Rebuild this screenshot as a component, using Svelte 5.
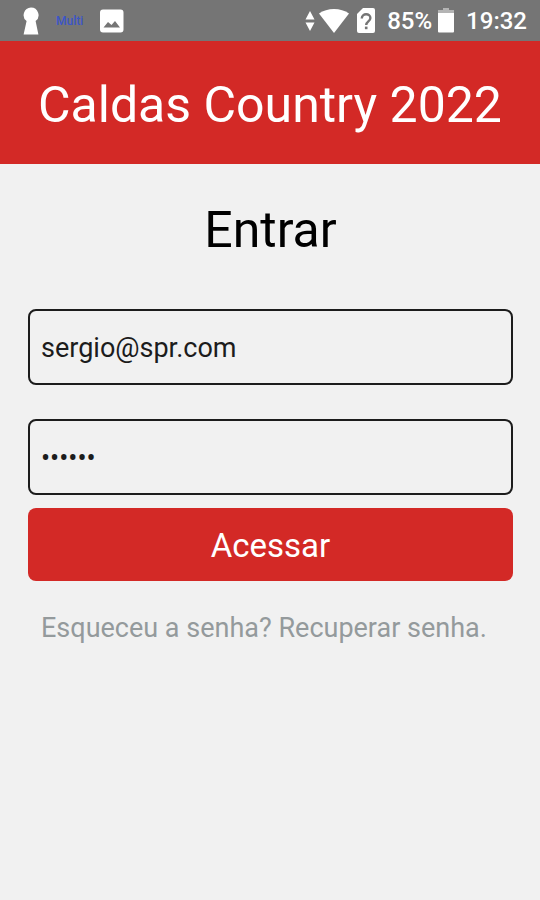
<script>
  let email = $state("sergio@spr.com");
  let password = $state("123456");

  function submit(e) {
    e.preventDefault();
  }
</script>

<div class="statusbar">
  <div class="group left">
    <svg width="16" height="28" viewBox="0 0 16 28" aria-hidden="true">
      <path fill="#fff" d="M8 0.5a7.6 7.6 0 0 1 4.6 13.6L15.4 27.5H0.6L3.6 14.1A7.6 7.6 0 0 1 8 0.5z" />
    </svg>
    <span class="carrier">Multi</span>
    <svg width="24" height="24" viewBox="0 0 24 24" aria-hidden="true">
      <path
        fill="#fff"
        fill-rule="evenodd"
        d="M3 0.5h17.500a3 3 0 0 1 3 3v17a3 3 0 0 1-3 3H3a3 3 0 0 1-3-3v-17a3 3 0 0 1 3-3zM3.500 18.500h16.500L15 12l-3.500 4L8 13z"
      />
    </svg>
  </div>
  <div class="group right">
    <svg width="10" height="20" viewBox="0 0 10 20" aria-hidden="true">
      <path fill="#fff" d="M5 0l4.500 8.500h-9zM5 20l4.500-8.500h-9z" />
    </svg>
    <svg class="wifi" width="30" height="24" viewBox="0 0 30 24" aria-hidden="true">
      <path fill="#fff" d="M0 4.500C8-1.500 22-1.500 30 4.500L15 24z" />
    </svg>
    <svg class="sim" width="18" height="25" viewBox="0 0 18 25" aria-hidden="true">
      <path fill="#fff" d="M6 0h10a2 2 0 0 1 2 2v21a2 2 0 0 1-2 2H2a2 2 0 0 1-2-2V6z" />
      <path
        fill="none"
        stroke="#757575"
        stroke-width="2.400"
        d="M4.800 10.500c0-5.600 8.600-5.600 8.600-0.400 0 3.400-4.200 3.300-4.200 7"
      />
      <path fill="#757575" d="M7.900 18.600h2.600v2.600H7.900z" />
    </svg>
    <span class="battery-level">85%</span>
    <svg class="battery" width="16" height="25" viewBox="0 0 16 25" aria-hidden="true">
      <path fill="#b4b4b4" d="M5 0h6v2h5v3H0V2h5z" />
      <path fill="#fff" d="M0 5h16v18.500a1 1 0 0 1-1 1H1a1 1 0 0 1-1-1z" />
    </svg>
    <span>19:32</span>
  </div>
</div>

<header>
  <h1>Caldas Country 2022</h1>
</header>

<main>
  <h2>Entrar</h2>
  <form onsubmit={submit}>
    <input class="email" type="email" aria-label="E-mail" bind:value={email} />
    <input type="password" aria-label="Senha" bind:value={password} />
    <button type="submit">Acessar</button>
  </form>
  <a href="#recuperar">Esqueceu a senha? Recuperar senha.</a>
</main>

<style>
  :global(body) {
    background: #f1f1f1;
    font-family: Roboto, sans-serif;
  }
  .statusbar {
    display: flex;
    align-items: center;
    justify-content: space-between;
    height: 41px;
    padding: 0 13px 0 23px;
    background: #757575;
    color: #fff;
    font-size: 24px;
    font-weight: 500;
  }
  .group {
    display: flex;
    align-items: center;
  }
  .left {
    gap: 15px;
  }
  .carrier {
    padding: 0 2px;
    color: #3c55c8;
    font-size: 12px;
  }
  .wifi {
    margin-left: 4px;
  }
  .sim {
    margin-left: 8px;
  }
  .battery-level {
    margin-left: 12px;
  }
  .battery {
    margin: 0 12px 0 6px;
  }
  header {
    padding: 35px 12px 29px;
    background: #d32926;
    color: #fff;
    text-align: center;
  }
  h1,
  h2 {
    margin: 0;
    font-size: 50px;
    font-weight: 400;
    line-height: 59px;
  }
  main {
    padding: 37px 27px 36px 28px;
  }
  h2 {
    color: #000;
    text-align: center;
  }
  form {
    display: flex;
    flex-direction: column;
    margin-top: 49px;
  }
  input {
    box-sizing: border-box;
    width: 100%;
    height: 76px;
    padding: 2px 12px 0 11px;
    border: 2px solid #1c1c1c;
    border-radius: 8px;
    outline: none;
    background: transparent;
    color: #1c1c1c;
    font-family: inherit;
    font-size: 27px;
  }
  .email {
    margin-bottom: 34px;
  }
  button {
    height: 73px;
    margin-top: 13px;
    padding: 2px 0 0;
    border: none;
    border-radius: 8px;
    background: #d32926;
    color: #fff;
    font-family: inherit;
    font-size: 33px;
    cursor: pointer;
  }
  a {
    display: block;
    margin-top: 31px;
    padding: 0 13px;
    color: #949a9c;
    font-size: 27px;
    line-height: 32px;
    text-decoration: none;
  }
</style>
